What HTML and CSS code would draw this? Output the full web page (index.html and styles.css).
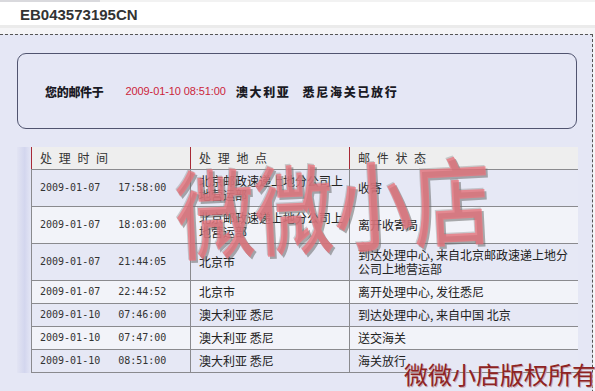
FILE: index.html
```html
<!DOCTYPE html>
<html lang="zh-CN">
<head>
<meta charset="utf-8">
<title>EB043573195CN</title>
<link rel="stylesheet" href="styles.css">
</head>
<body>
<div class="page">
  <div class="top">
    <div class="tab"></div>
    <h1 class="code">EB043573195CN</h1>
  </div>
  <div class="strip"></div>
  <div class="panel">
    <div class="summary">
      <span class="lead">您的邮件于</span>
      <span class="when">2009-01-10 08:51:00</span>
      <span class="place">澳大利亚</span>
      <span class="place">悉尼海关已放行</span>
    </div>
    <div class="track">
      <div class="shade"></div>
      <table class="log">
        <colgroup><col class="c1"><col class="c2"><col class="c3"></colgroup>
        <thead>
          <tr><th>处 理 时 间</th><th>处 理 地 点</th><th>邮 件 状 态</th></tr>
        </thead>
        <tbody>
          <tr><td class="t"><span>2009-01-07</span><span class="hm">17:58:00</span></td><td>北京邮政速递上地分公司上地营运部</td><td>收寄</td></tr>
          <tr><td class="t"><span>2009-01-07</span><span class="hm">18:03:00</span></td><td>北京邮政速递上地分公司上地营运部</td><td>离开收寄局</td></tr>
          <tr><td class="t"><span>2009-01-07</span><span class="hm">21:44:05</span></td><td>北京市</td><td>到达处理中心, 来自北京邮政速递上地分公司上地营运部</td></tr>
          <tr><td class="t"><span>2009-01-07</span><span class="hm">22:44:52</span></td><td>北京市</td><td>离开处理中心, 发往悉尼</td></tr>
          <tr><td class="t"><span>2009-01-10</span><span class="hm">07:46:00</span></td><td>澳大利亚 悉尼</td><td>到达处理中心, 来自中国 北京</td></tr>
          <tr><td class="t"><span>2009-01-10</span><span class="hm">07:47:00</span></td><td>澳大利亚 悉尼</td><td>送交海关</td></tr>
          <tr><td class="t"><span>2009-01-10</span><span class="hm">08:51:00</span></td><td>澳大利亚 悉尼</td><td>海关放行</td></tr>
        </tbody>
      </table>
      <div class="mark">微微小店</div>
    </div>
  </div>
  <div class="copy">微微小店版权所有</div>
</div>
</body>
</html>
```
FILE: styles.css
```css
html, body {
  margin: 0;
  padding: 0;
  background: #e5e7f5;
}
body {
  font-family: "Noto Sans CJK SC", "Liberation Sans", sans-serif;
  font-size: 12px;
  color: #222;
}
.page {
  position: relative;
  width: 595px;
  height: 391px;
  overflow: hidden;
  background: #f6f6f8;
}
.top {
  position: relative;
  height: 23px;
  background: #ffffff;
  border-top: 2px solid #f2f2f2;
  border-bottom: 3px solid #ebebeb;
}
.tab {
  position: absolute;
  left: 0;
  top: -2px;
  width: 100px;
  height: 2px;
  background: #d9d9dd;
}
.code {
  margin: 0;
  padding: 2px 0 0 20px;
  font-family: "Liberation Sans", Arial, sans-serif;
  font-size: 15px;
  font-weight: bold;
  line-height: 21px;
  color: #333;
}
.strip {
  height: 6px;
  background: #f5f5f7;
}
.panel {
  margin-right: 2px;
  height: 400px;
  background: #e5e7f5;
  border-top: 1px dashed #555;
  border-right: 1px dashed #555;
  padding-top: 18px;
}
.summary {
  margin: 0 15px 0 17px;
  height: 74px;
  border: 1px solid #50546f;
  border-radius: 9px;
  display: flex;
  align-items: center;
  padding-left: 27px;
  font-weight: bold;
  color: #1a1a24;
}
.lead {
  font-size: 12px;
  font-weight: 900;
  letter-spacing: -0.3px;
}
.when {
  margin: 0 10px 0 22px;
  font-family: "Liberation Sans", Arial, sans-serif;
  font-size: 11px;
  font-weight: normal;
  color: #cc1f3a;
  letter-spacing: -0.1px;
}
.place {
  font-weight: 900;
  letter-spacing: 1.7px;
  margin-right: 12px;
}
.track {
  position: relative;
  display: flex;
  margin: 18px 15px 0 17px;
}
.shade {
  width: 14px;
  flex: none;
  background: linear-gradient(to right, #e2e4f3, #d3d6ee 55%, #e4e6f5);
}
.log {
  flex: 1;
  border-collapse: collapse;
  table-layout: fixed;
  width: 546px;
}
.c1 { width: 159px; }
.c2 { width: 159px; }
.c3 { width: 228px; }
.log th {
  background: #eeeeee;
  border-left: 1px solid #a82a36;
  border-bottom: 1px solid #8a8a8e;
  padding: 4px 8px;
  line-height: 14px;
  font-weight: normal;
  text-align: left;
  color: #333;
  letter-spacing: 2px;
}
.log td {
  border-left: 1px solid #8a8a8e;
  border-bottom: 1px solid #8a8a8e;
  padding: 4px 6px 4px 8px;
  line-height: 14px;
  vertical-align: middle;
  color: #222;
}
.log tbody tr:nth-child(odd) td { background: #e6e8f5; }
.log tbody tr:nth-child(even) td { background: #f2f3f9; }
.log td.t {
  font-family: "DejaVu Sans Mono", monospace;
  font-size: 10px;
  color: #333;
}
.hm {
  margin-left: 18px;
}
.mark {
  position: absolute;
  left: 156px;
  top: 16px;
  font-family: "Noto Sans CJK SC", sans-serif;
  font-size: 84px;
  font-weight: 500;
  line-height: 1;
  color: rgba(238, 112, 122, 0.72);
  text-shadow: 2px 2px 0 rgba(105, 105, 105, 0.55), -1px -1px 0 rgba(150, 150, 150, 0.45);
  transform: rotate(-3deg) scale(0.94, 1.16);
  transform-origin: left top;
  white-space: nowrap;
  pointer-events: none;
}
.copy {
  position: absolute;
  left: 404px;
  top: 360px;
  font-family: "Noto Sans CJK SC", sans-serif;
  font-size: 24px;
  line-height: 28px;
  color: #8e2323;
  text-shadow: 1px 1px 0 #c8aab0;
  white-space: nowrap;
}
```
